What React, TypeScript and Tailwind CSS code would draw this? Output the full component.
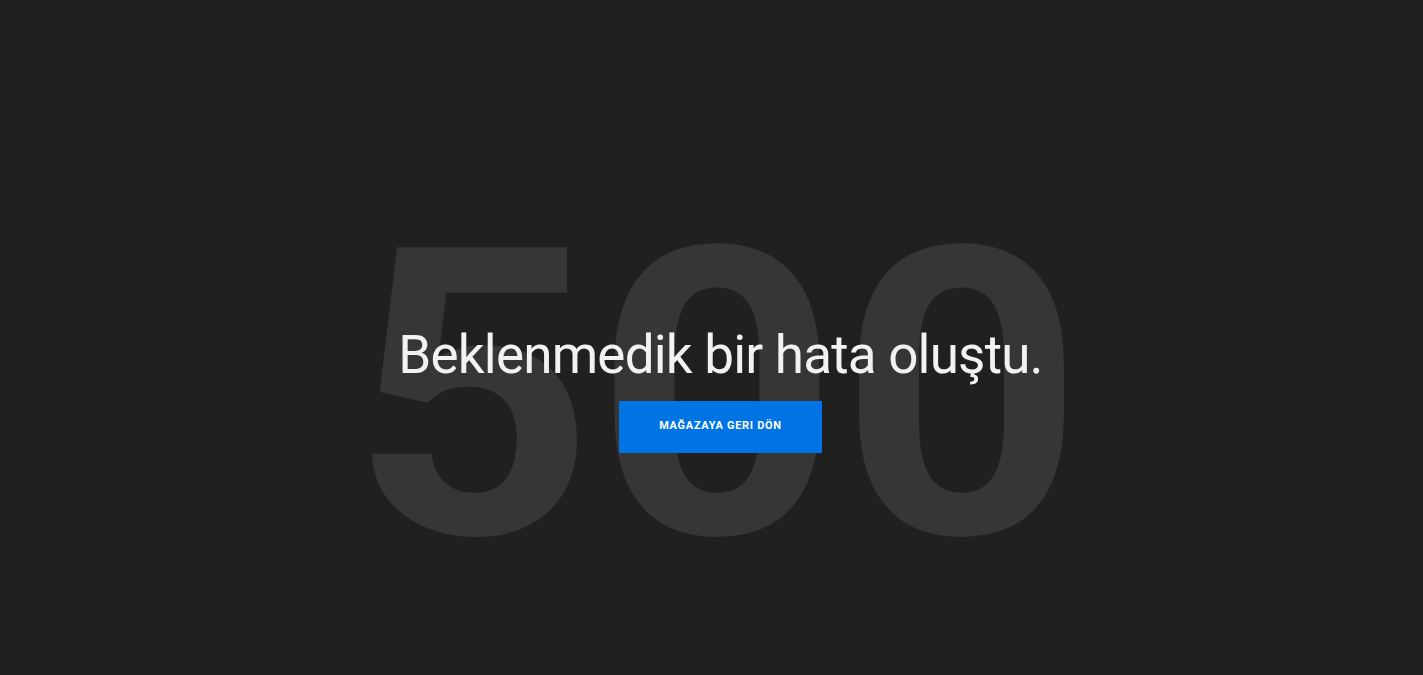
import React from "react";

export default function App() {
  return (
    <div className="h-[675px] w-full bg-[#202020] overflow-hidden flex items-center justify-center pl-[18px] pt-[102px]" style={{ fontFamily: "Roboto, 'Liberation Sans', sans-serif" }}>
      <div className="relative flex flex-col items-center">
        <div className="absolute left-1/2 top-1/2 -translate-x-1/2 -translate-y-1/2 mt-[7px] ml-[-4px] text-[402px] leading-none font-bold text-[#363636] select-none whitespace-nowrap scale-x-[1.06]">
          500
        </div>
        <h1 className="relative text-[53px] leading-[60px] text-[#f2f2f2] font-normal tracking-[-0.8px] whitespace-nowrap">
          Beklenmedik bir hata oluştu.
        </h1>
        <button className="relative mt-[16px] w-[203px] h-[52px] bg-[#0074e4] text-white text-[11px] font-bold tracking-[0.7px] uppercase">
          MAĞAZAYA GERI DÖN
        </button>
      </div>
    </div>
  );
}
